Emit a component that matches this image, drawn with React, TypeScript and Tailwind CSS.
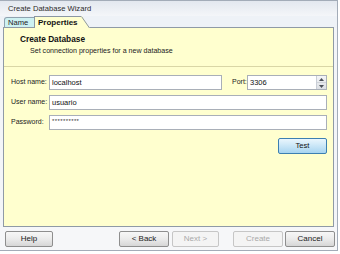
import type { ReactNode } from 'react';

function Btn({ label, disabled, className = '' }: { label: string; disabled?: boolean; className?: string }) {
  return (
    <div
      className={`h-[16px] flex items-center justify-center rounded-[2px] border text-[8px] ${
        disabled
          ? 'border-[#c6c6c6] bg-[#f4f4f4] text-[#a9a9a9]'
          : 'border-[#8e8e8e] bg-linear-to-b from-[#f7f7f7] via-[#ebebeb] to-[#d6d6d6] text-[#1a1a1a]'
      } ${className}`}
    >
      {label}
    </div>
  );
}

function Field({ children, className = '' }: { children?: ReactNode; className?: string }) {
  return (
    <div className={`relative h-[15px] border border-[#a9afb8] bg-white pl-[2px] flex items-center text-[7.5px] text-[#111] ${className}`}>
      {children}
    </div>
  );
}

function Label({ text }: { text: string }) {
  return <div className="w-[38px] text-[7px] text-[#222] whitespace-nowrap">{text}</div>;
}

export default function App() {
  return (
    <div className="w-[340px] h-[254px] bg-white font-['Liberation_Sans',Arial,sans-serif]">
      <div className="w-[338px] h-[251px] flex flex-col border-r border-b border-t border-[#a3acb8] bg-[#f3f5f8]">
        {/* title */}
        <div className="h-[15px] flex items-center pl-[8px] bg-linear-to-b from-[#e3e8ef] to-[#f4f6f9] text-[7.6px] text-[#2a2a2a]">
          Create Database Wizard
        </div>

        {/* tabs */}
        <div className="h-[12px] flex items-end pl-[4px] bg-[#eef2f7]">
          <div className="h-[11px] w-[31px] flex items-center pl-[3px] border border-b-0 border-[#8fa2b0] rounded-tl-[3px] bg-[#cdf1f2] text-[7.6px] text-[#222]">
            Name
          </div>
          <div className="relative h-[12px] w-[47px] -ml-[1px] flex items-center pl-[3px] border border-b-0 border-r-0 border-[#8b97a3] bg-[#ffffcf] text-[8px] font-bold text-[#111] z-10">
            Properties
          </div>
          <svg width="9" height="12" viewBox="0 0 9 12" className="block z-10">
            <polygon points="0,0 1,0 9,12 0,12" fill="#ffffcf" />
            <line x1="0.5" y1="0.5" x2="8.5" y2="12" stroke="#8b97a3" strokeWidth="1" />
          </svg>
        </div>

        {/* panel */}
        <div className="mx-[3px] h-[200px] border border-[#8f9aa6] bg-[#ffffcf] -mt-[1px] flex flex-col">
          <div className="h-[39px] border-b border-[#d9d6a6] pl-[16px] pt-[6px]">
            <div className="text-[8.3px] font-bold text-[#111] leading-[10px]">Create Database</div>
            <div className="pl-[10px] mt-[2px] text-[7.1px] text-[#222] leading-[10px]">
              Set connection properties for a new database
            </div>
          </div>

          <div className="pl-[7px] pt-[8px] flex flex-col gap-[5px]">
            <div className="flex items-center">
              <Label text="Host name:" />
              <Field className="w-[173px]">localhost</Field>
              <div className="ml-[10px] w-[15px] text-[7px] text-[#222]">Port:</div>
              <Field className="w-[80px]">
                3306
                <div className="absolute right-0 top-0 bottom-0 w-[10px] flex flex-col border-l border-[#c9ced6] bg-linear-to-b from-[#f4f5f7] to-[#dcdfe4]">
                  <div className="flex-1 flex items-center justify-center">
                    <svg width="5" height="3" viewBox="0 0 5 3"><polygon points="2.5,0 5,3 0,3" fill="#4a4f57" /></svg>
                  </div>
                  <div className="flex-1 flex items-center justify-center border-t border-[#d0d4da]">
                    <svg width="5" height="3" viewBox="0 0 5 3"><polygon points="0,0 5,0 2.5,3" fill="#4a4f57" /></svg>
                  </div>
                </div>
              </Field>
            </div>
            <div className="flex items-center">
              <Label text="User name:" />
              <Field className="w-[278px]">usuario</Field>
            </div>
            <div className="flex items-center">
              <Label text="Password:" />
              <Field className="w-[278px]">
                <span className="text-[6px] leading-none -mt-[3px] tracking-[0.4px] text-[#333]">**********</span>
              </Field>
            </div>
            <div className="flex mt-[3px] pl-[267px]">
              <div className="h-[16px] w-[49px] flex items-center justify-center rounded-[2px] border border-[#3c7fb1] bg-linear-to-b from-[#eaf6fd] via-[#c9e6f7] to-[#a7d4f0] text-[7.6px] text-[#111]">
                Test
              </div>
            </div>
          </div>
        </div>

        {/* footer */}
        <div className="flex pt-[4px] bg-[#f6f7f9] flex-1 items-start">
          <Btn label="Help" className="ml-[5px] w-[48px]" />
          <Btn label="< Back" className="ml-[66px] w-[50px]" />
          <Btn label="Next >" disabled className="ml-[3px] w-[47px]" />
          <Btn label="Create" disabled className="ml-[14px] w-[50px]" />
          <Btn label="Cancel" className="ml-[2px] w-[50px]" />
        </div>
      </div>
    </div>
  );
}
